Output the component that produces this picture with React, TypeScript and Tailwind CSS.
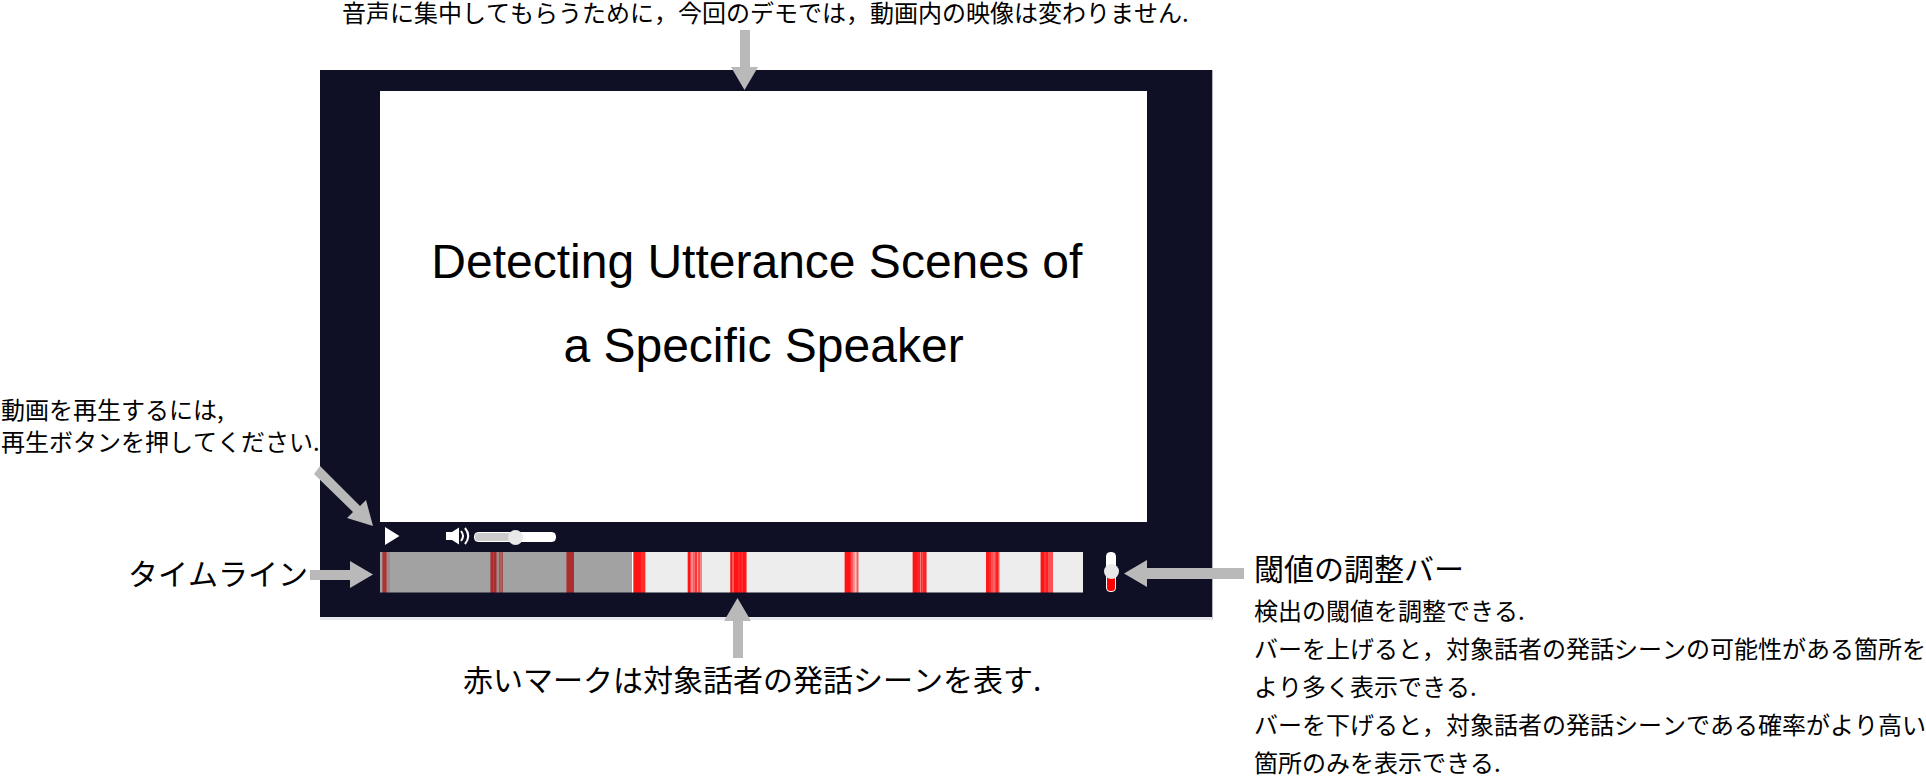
import { useState } from "react";

type Mark = [start: number, width: number, opacity: number];

const TIMELINE_WIDTH = 703;
const PLAYED = 252;

const marks: Mark[] = [
  [2, 1, 0.6], [3, 3, 0.95], [6, 1, 0.6], [7, 3, 0.2],
  [110, 1, 0.6], [111, 2, 1], [113, 1, 0.8], [114, 2, 1], [116, 1, 0.6], [117, 2, 0.2], [119, 1, 0.7], [120, 2, 0.55], [122, 1, 0.7],
  [186, 1, 0.55], [187, 7, 1],
  [253, 1, 0.6], [254, 7, 0.94], [261, 1, 0.8], [262, 3, 0.85], [265, 1, 0.3],
  [307, 1, 0.3], [308, 2, 0.95], [310, 1, 0.7], [311, 2, 0.45], [313, 2, 0.6], [315, 2, 0.8], [317, 1, 0.35], [318, 2, 0.7], [320, 2, 0.45],
  [350, 1, 0.7], [351, 1, 0.95], [352, 2, 0.65], [354, 4, 0.95], [358, 2, 0.88], [360, 1, 0.95], [361, 2, 0.85], [363, 3, 0.95], [366, 1, 0.5],
  [464, 1, 0.35], [465, 5, 0.95], [470, 1, 0.85], [471, 2, 0.65], [473, 2, 0.4], [475, 1, 0.2], [476, 1, 0.4], [477, 1, 0.65], [478, 1, 0.3],
  [532, 1, 0.35], [533, 4, 0.95], [537, 3, 0.88], [540, 1, 0.5], [541, 1, 0.85], [542, 1, 0.7], [543, 3, 0.88], [546, 1, 0.5],
  [606, 3, 0.92], [609, 2, 0.85], [611, 2, 0.7], [613, 2, 0.6], [615, 1, 0.75], [616, 2, 0.9], [618, 1, 0.7], [619, 1, 0.3],
  [660, 1, 0.4], [661, 3, 0.95], [664, 2, 0.8], [666, 2, 0.9], [668, 5, 0.68],
];

const thumb =
  "[&::-webkit-slider-thumb]:size-[15px] [&::-webkit-slider-thumb]:appearance-none [&::-webkit-slider-thumb]:rounded-full [&::-webkit-slider-thumb]:bg-[#e8e8e8]";

function Timeline() {
  return (
    <svg
      role="img"
      aria-label="タイムライン"
      viewBox={`0 0 ${TIMELINE_WIDTH} 41`}
      preserveAspectRatio="none"
      shapeRendering="crispEdges"
      className="h-[41px] min-w-0 flex-1"
    >
      <rect width={TIMELINE_WIDTH} height="41" fill="#ededed" />
      {marks.map(([x, width, opacity]) => (
        <rect key={x} x={x} width={width} height="41" fill="#ff0808" opacity={opacity} />
      ))}
      <rect width={PLAYED} height="41" fill="#545454" opacity="0.49" />
      <rect x={PLAYED} width="1" height="41" fill="#ffffff" />
      <rect y="40" width={TIMELINE_WIDTH} height="1" fill="#0f0f26" opacity="0.5" />
    </svg>
  );
}

function Arrow({ className, width, height, points }: { className: string; width: number; height: number; points: string }) {
  return (
    <svg aria-hidden="true" width={width} height={height} className={`pointer-events-none absolute ${className}`}>
      <polygon points={points} fill="#b9b9b9" />
    </svg>
  );
}

function Player() {
  const [volume, setVolume] = useState(50);
  const [threshold, setThreshold] = useState(52);

  return (
    <section className="relative border-r border-b-[3px] border-r-[#b4b4be] border-b-[#e8e9ec] bg-[#0f0f26] pt-[21px] pb-6 pl-[60px]">
      <div className="mr-[65px] aspect-[767/431] bg-white pt-[129px] text-center font-['Liberation_Sans',sans-serif] text-5xl leading-[84px] text-black">
        <h1>
          Detecting Utterance Scenes of&nbsp;
          <br />a Specific Speaker
        </h1>
      </div>

      <div className="flex h-[30px] items-center">
        <button type="button" aria-label="再生" className="ml-[5px]">
          <svg width="15" height="20" viewBox="0 0 15 20" className="block">
            <path d="M0 0 14.500 9 0 18Z" fill="#fff" />
          </svg>
        </button>
        <svg aria-hidden="true" width="24" height="20" viewBox="0 0 24 20" className="ml-[46px]">
          <path d="M0 5H6L13 0.500V17.500L6 13H0Z" fill="#fff" />
          <path d="M15 4Q19 9 15 14M19 1Q25.500 9 19 17" fill="none" stroke="#fff" strokeWidth="2" />
        </svg>
        <input
          type="range"
          aria-label="音量"
          value={volume}
          onChange={(e) => setVolume(Number(e.target.value))}
          className={`ml-1 h-[10px] w-[82px] appearance-none rounded border border-white ${thumb}`}
          style={{ background: `linear-gradient(to right, #cccccc ${volume}%, #ffffff ${volume}%)` }}
        />
      </div>

      <div className="flex">
        <Timeline />
        <div className="flex w-[129px] pl-[23px]">
          <input
            type="range"
            aria-label="閾値"
            value={threshold}
            onChange={(e) => setThreshold(Number(e.target.value))}
            className={`h-10 w-[10px] appearance-none rounded border border-white [direction:rtl] [writing-mode:vertical-lr] ${thumb}`}
            style={{ background: `linear-gradient(to top, #ff0000 ${threshold}%, #ffffff ${threshold}%)` }}
          />
        </div>
      </div>

      <Arrow className="left-[411px] -top-10" width={27} height={60} points="9,0 19,0 19,37 27,37 13.500,60 0,37 9,37" />
      <Arrow className="-left-[6px] bottom-[91px]" width={59} height={60} points="6,0 0,8 39,46 33,52 59,60 52,34 46,40" />
      <Arrow className="-left-[10px] bottom-[29px]" width={63} height={27} points="0,9 40,9 40,0 63,13.500 40,27 40,19 0,19" />
      <Arrow className="-right-8 bottom-[30px]" width={120} height={27} points="120,8 23,8 23,0 0,13.500 23,27 23,19 120,19" />
      <Arrow className="left-[404px] -bottom-[41px]" width={27} height={60} points="9,60 19,60 19,23 27,23 13.500,0 0,23 9,23" />
    </section>
  );
}

export default function App() {
  return (
    <main
      lang="ja"
      className="grid grid-cols-[minmax(0,320fr)_minmax(0,893fr)_minmax(0,713fr)] bg-white font-['Noto_Sans_CJK_JP',sans-serif] text-2xl whitespace-nowrap text-black [font-kerning:none]"
    >
      <p className="col-start-2 h-[70px] pl-[22px] leading-6">
        音声に集中してもらうために，今回のデモでは，動画内の映像は変わりません.
      </p>

      <div className="col-start-1 row-start-2 pt-[323px]">
        <p className="pl-px leading-8">
          動画を再生するには,
          <br />
          再生ボタンを押してください.
        </p>
        <p className="mt-[95px] pr-3 text-right text-[30px] leading-10">タイムライン</p>
      </div>

      <div className="col-start-2 row-start-2">
        <Player />
        <p className="mt-9 pl-[143px] text-[30px] leading-[45px]">赤いマークは対象話者の発話シーンを表す.</p>
      </div>

      <div className="col-start-3 row-start-2 pt-[477px] pl-[41px]">
        <h2 className="text-[30px] leading-10">閾値の調整バー</h2>
        <p className="mt-1 leading-[38px]">
          検出の閾値を調整できる.
          <br />
          バーを上げると，対象話者の発話シーンの可能性がある箇所を
          <br />
          より多く表示できる.
          <br />
          バーを下げると，対象話者の発話シーンである確率がより高い
          <br />
          箇所のみを表示できる.
        </p>
      </div>
    </main>
  );
}
